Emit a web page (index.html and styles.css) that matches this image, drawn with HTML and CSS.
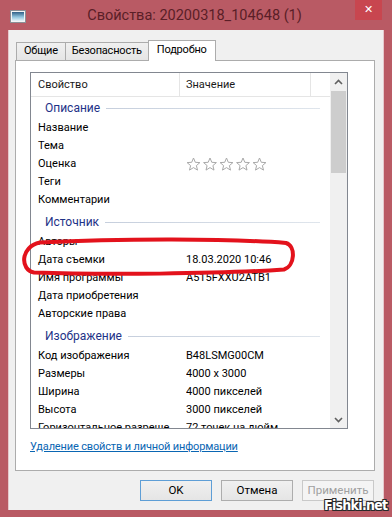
FILE: index.html
```html
<!DOCTYPE html>
<html lang="ru">
<head>
<meta charset="utf-8">
<title>Свойства</title>
<link rel="stylesheet" href="styles.css">
</head>
<body>
<div class="window">
  <div class="titlebar">
    <svg class="app-icon" width="16" height="13" viewBox="0 0 16 13">
      <defs>
        <linearGradient id="sky" x1="0" y1="0" x2="0" y2="1">
          <stop offset="0" stop-color="#2f5f86"/>
          <stop offset="0.55" stop-color="#8fc4de"/>
          <stop offset="1" stop-color="#e8f4f8"/>
        </linearGradient>
      </defs>
      <rect x="0.5" y="0.5" width="15" height="12" fill="#f4f4f4" stroke="#8a8f96"/>
      <rect x="2" y="2" width="12" height="9" fill="url(#sky)"/>
    </svg>
    <div class="title">Свойства: 20200318_104648 (1)</div>
    <div class="close">&#x2715;</div>
  </div>
  <div class="client">
    <div class="tabs">
      <div class="tab">Общие</div>
      <div class="tab">Безопасность</div>
      <div class="tab active">Подробно</div>
    </div>
    <div class="panel">
      <div class="listview">
        <div class="lv-main">
          <div class="lv-header">
            <div class="hcol c1">Свойство</div>
            <div class="hcol c2">Значение</div>
            <div class="hcol c3"></div>
          </div>
          <div class="lv-body">
            <div class="group first"><span>Описание</span><i></i></div>
            <div class="row"><div class="c1">Название</div><div class="c2"></div></div>
            <div class="row"><div class="c1">Тема</div><div class="c2"></div></div>
            <div class="row"><div class="c1">Оценка</div><div class="c2 stars">
              <svg width="84" height="15" viewBox="0 0 84 15">
                <g fill="#fff" stroke="#a9a9a9" stroke-width="1" stroke-linejoin="round">
                  <path id="st" d="M7.5 1 L9.3 5.3 L13.9 5.6 L10.4 8.6 L11.5 13.1 L7.5 10.6 L3.5 13.1 L4.6 8.6 L1.1 5.6 L5.7 5.3 Z"/>
                  <use href="#st" x="16.5"/>
                  <use href="#st" x="33"/>
                  <use href="#st" x="49.5"/>
                  <use href="#st" x="66"/>
                </g>
              </svg>
            </div></div>
            <div class="row"><div class="c1">Теги</div><div class="c2"></div></div>
            <div class="row"><div class="c1">Комментарии</div><div class="c2"></div></div>
            <div class="group"><span>Источник</span><i></i></div>
            <div class="row"><div class="c1">Авторы</div><div class="c2"></div></div>
            <div class="row"><div class="c1">Дата съемки</div><div class="c2">18.03.2020 10:46</div></div>
            <div class="row"><div class="c1">Имя программы</div><div class="c2">A515FXXU2ATB1</div></div>
            <div class="row"><div class="c1">Дата приобретения</div><div class="c2"></div></div>
            <div class="row"><div class="c1">Авторские права</div><div class="c2"></div></div>
            <div class="group"><span>Изображение</span><i></i></div>
            <div class="row"><div class="c1">Код изображения</div><div class="c2">B48LSMG00CM</div></div>
            <div class="row"><div class="c1">Размеры</div><div class="c2">4000 x 3000</div></div>
            <div class="row"><div class="c1">Ширина</div><div class="c2">4000 пикселей</div></div>
            <div class="row"><div class="c1">Высота</div><div class="c2">3000 пикселей</div></div>
            <div class="row"><div class="c1">Горизонтальное разреше...</div><div class="c2">72 точек на дюйм</div></div>
          </div>
        </div>
        <div class="scrollbar">
          <div class="sb-btn">
            <svg width="9" height="6" viewBox="0 0 9 6"><path d="M1 5 L4.5 1.5 L8 5" fill="none" stroke="#606060" stroke-width="1.6"/></svg>
          </div>
          <div class="sb-track"><div class="sb-thumb"></div></div>
          <div class="sb-btn">
            <svg width="9" height="6" viewBox="0 0 9 6"><path d="M1 1 L4.5 4.5 L8 1" fill="none" stroke="#606060" stroke-width="1.6"/></svg>
          </div>
        </div>
      </div>
      <a class="link" href="#">Удаление свойств и личной информации</a>
    </div>
    <div class="buttons">
      <div class="btn default">OK</div>
      <div class="btn">Отмена</div>
      <div class="btn disabled">Применить</div>
    </div>
  </div>
  <svg class="marker" width="392" height="517" viewBox="0 0 392 517">
    <path d="M40 242.5 C120 238.5 230 238.5 286 243 C296 246 295 266 284 269.5 C220 274 100 275 34 272.5 C20 270 20 246.5 40 242.5 Z" fill="none" stroke="#e3121c" stroke-width="4" stroke-linejoin="round"/>
  </svg>
  <div class="watermark">Fishki.net</div>
</div>
</body>
</html>
```
FILE: styles.css
```css
* { box-sizing: border-box; }
html, body { margin: 0; padding: 0; }
body {
  width: 392px;
  height: 517px;
  overflow: hidden;
  background: #b95a64;
  font-family: Roboto, "Noto Sans", sans-serif;
  font-size: 11px;
  color: #000;
}
.window {
  position: relative;
  width: 392px;
  height: 517px;
  background: #b95a64;
}
.titlebar {
  height: 30px;
  display: flex;
  align-items: flex-start;
  padding-left: 10px;
  padding-right: 10px;
}
.app-icon { margin-top: 10px; flex: none; }
.title {
  flex: 1;
  text-align: center;
  font-size: 14.5px;
  line-height: 20px;
  margin-top: 6px;
  padding-left: 8px;
  color: #5a1e27;
}
.close {
  flex: none;
  width: 27px;
  height: 20px;
  background: #c8464f;
  color: #fff;
  font-size: 11px;
  line-height: 20px;
  text-align: center;
  font-family: "DejaVu Sans", sans-serif;
  font-weight: bold;
}
.client {
  margin: 0 8px;
  height: 480px;
  background: #f0f0f0;
  padding: 10px 8px 0 6px;
  border-left: 1px solid #e6c8cc;
  border-right: 1px solid #e6c8cc;
}
.tabs {
  display: flex;
  align-items: flex-end;
  height: 20px;
  position: relative;
  z-index: 1;
}
.tab {
  height: 18px;
  line-height: 16px;
  padding: 0 6px;
  border: 1px solid #acacac;
  border-bottom: none;
  border-right: none;
  background: linear-gradient(#f0f0f0, #e5e5e5);
  color: #000;
  font-size: 11px;
  letter-spacing: -0.2px;
}
.tab:first-child { margin-left: 1px; padding: 0 7px; }
.tab.active {
  height: 21px;
  line-height: 18px;
  padding: 0 8px;
  background: #fff;
  border-right: 1px solid #acacac;
  margin-bottom: -1px;
}
.panel {
  height: 411px;
  background: #fff;
  border: 1px solid #acacac;
  padding: 11px 14px 0 14px;
}
.listview {
  width: 318px;
  height: 357px;
  border: 1px solid #828790;
  display: flex;
}
.lv-main {
  flex: 1;
  overflow: hidden;
}
.lv-header {
  display: flex;
  height: 24px;
  border-bottom: 1px solid #e5e5e5;
  line-height: 23px;
  color: #1a1a1a;
}
.hcol { border-right: 1px solid #e5e5e5; }
.hcol.c1 { width: 149px; padding-left: 7px; }
.hcol.c2 { width: 131px; padding-left: 6px; }
.hcol.c3 { flex: 1; border-right: none; }
.lv-body {
  height: 331px;
  overflow: hidden;
}
.group {
  display: flex;
  align-items: center;
  height: 22px;
  margin-top: 2px;
  padding-left: 14px;
  padding-right: 10px;
  color: #1e3287;
  font-size: 12px;
}
.group.first { margin-top: 0; }
.group span { flex: none; }
.group i {
  flex: 1;
  height: 1px;
  margin-left: 6px;
  margin-top: 1px;
  background: linear-gradient(90deg, #c6cfdd, #dfe5ec);
}
.row {
  display: flex;
  height: 18px;
  line-height: 18px;
  white-space: nowrap;
}
.row .c1 { width: 155px; padding-left: 7px; padding-right: 6px; overflow: hidden; text-overflow: clip; }
.row .c2 { flex: 1; overflow: hidden; }
.stars { display: flex; align-items: center; }
.stars svg { display: block; }
.scrollbar {
  width: 17px;
  flex: none;
  background: #f0f0f0;
  display: flex;
  flex-direction: column;
}
.sb-btn {
  height: 17px;
  display: flex;
  align-items: center;
  justify-content: center;
  flex: none;
}
.sb-track { flex: 1; padding: 1px 1px 0 1px; }
.sb-thumb { height: 82px; background: #cdcdcd; }
.link {
  display: inline-block;
  margin-top: 10px;
  line-height: 16px;
  font-size: 11px;
  letter-spacing: -0.15px;
  color: #0a66b3;
  text-decoration: underline;
}
.buttons {
  display: flex;
  justify-content: flex-end;
  gap: 9px;
  margin-top: 9px;
  padding-right: 1px;
}
.btn {
  width: 72px;
  height: 21px;
  line-height: 19px;
  text-align: center;
  border: 1px solid #adadad;
  background: linear-gradient(#f0f0f0, #e5e5e5);
  color: #000;
  font-size: 11.5px;
}
.btn.default { border-color: #5e9ed6; }
.btn.disabled { color: #a0a0a0; border-color: #c9c9c9; background: #f4f4f4; }
.marker {
  position: absolute;
  left: 0;
  top: 0;
  pointer-events: none;
}
.watermark {
  position: absolute;
  left: 324px;
  top: 497px;
  line-height: 16px;
  font-family: "DejaVu Sans", sans-serif;
  font-stretch: condensed;
  font-weight: bold;
  font-size: 14px;
  letter-spacing: -0.7px;
  color: #fff;
  text-shadow: -1px -1px 0 #2a2a2a, 1px -1px 0 #2a2a2a, -1px 1px 0 #2a2a2a, 1px 1px 0 #2a2a2a, 0 1px 0 #2a2a2a, 1px 0 0 #2a2a2a;
}
```
